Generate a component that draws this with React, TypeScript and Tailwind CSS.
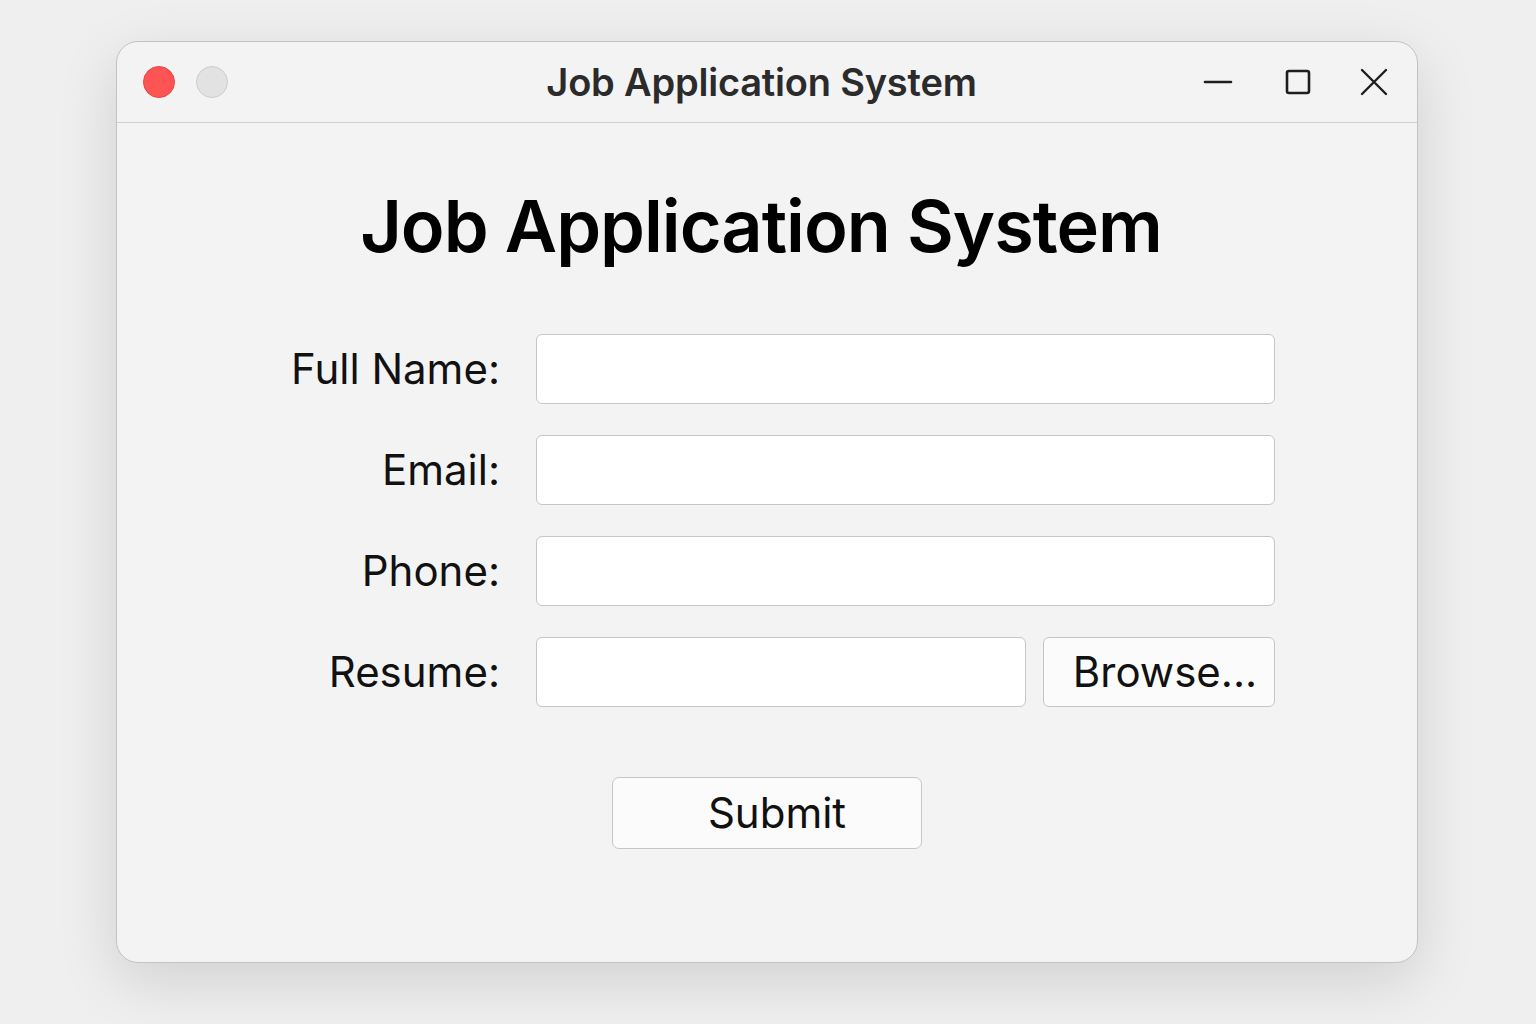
import React from "react";

const font = { fontFamily: "Inter, 'Noto Sans', sans-serif" };

function TitleBar() {
  return (
    <div className="grid h-[81px] shrink-0 grid-cols-[1fr_auto_1fr] items-center border-b border-[#cfcfcf] pl-[26px] pr-[29px]">
      <div className="flex items-center gap-[21px]">
        <span className="h-[32px] w-[32px] rounded-full border border-[#e84444] bg-[#fe5454]" />
        <span className="h-[32px] w-[32px] rounded-full border border-[#cdcdcd] bg-[#e2e2e2]" />
      </div>
      <div className="pr-[8px] text-[38px] font-semibold leading-none tracking-[-0.2px] text-[#2b2b2b]">
        Job Application System
      </div>
      <div className="flex items-center justify-end">
        <svg width="30" height="30" viewBox="0 0 30 30" className="mr-[51px]">
          <line x1="2" y1="15" x2="28" y2="15" stroke="#1e1e1e" strokeWidth="2.6" strokeLinecap="round" />
        </svg>
        <svg width="28" height="28" viewBox="0 0 28 28" className="mr-[48px]">
          <rect x="3" y="3" width="22" height="22" rx="2" fill="none" stroke="#1e1e1e" strokeWidth="2.6" />
        </svg>
        <svg width="28" height="28" viewBox="0 0 28 28">
          <path d="M2 2 L26 26 M26 2 L2 26" stroke="#1e1e1e" strokeWidth="2.4" strokeLinecap="round" />
        </svg>
      </div>
    </div>
  );
}

function Field({ label }: { label: string }) {
  return (
    <>
      <label className="text-right text-[42px] leading-none text-[#111]">{label}</label>
      <input className="h-[70px] w-full rounded-[6px] border border-[#c6c6c6] bg-white px-4 text-[28px] outline-none" />
    </>
  );
}

export default function App() {
  return (
    <div className="min-h-[1024px] bg-[#efefef] pl-[116px] pt-[41px]" style={font}>
      <div className="flex h-[922px] w-[1302px] flex-col overflow-hidden rounded-[22px] border border-[#c2c2c2] bg-[#f4f3f4] shadow-[0_18px_60px_rgba(0,0,0,0.13)]">
        <TitleBar />
        <div className="flex flex-col pt-[67px]">
          <h1 className="pr-[12px] text-center text-[72px] font-semibold leading-none tracking-[-1px] text-black">
            Job Application System
          </h1>

          <div className="mt-[72px] grid grid-cols-[383px_739px] items-center gap-x-[36px] gap-y-[31px]">
            <Field label="Full Name:" />
            <Field label="Email:" />
            <Field label="Phone:" />
            <label className="text-right text-[42px] leading-none text-[#111]">Resume:</label>
            <div className="flex gap-[17px]">
              <input className="h-[70px] w-[490px] rounded-[6px] border border-[#c6c6c6] bg-white px-4 text-[28px] outline-none" />
              <button className="h-[70px] flex-1 rounded-[6px] border border-[#c6c6c6] bg-[#fbfbfb] pl-[12px] text-[42px] leading-none text-[#111]">
                Browse...
              </button>
            </div>
          </div>

          <button className="mx-auto mt-[70px] h-[72px] w-[310px] rounded-[7px] border border-[#c6c6c6] bg-[#fbfbfb] pl-[20px] text-[42px] leading-none text-[#111]">
            Submit
          </button>
        </div>
      </div>
    </div>
  );
}
